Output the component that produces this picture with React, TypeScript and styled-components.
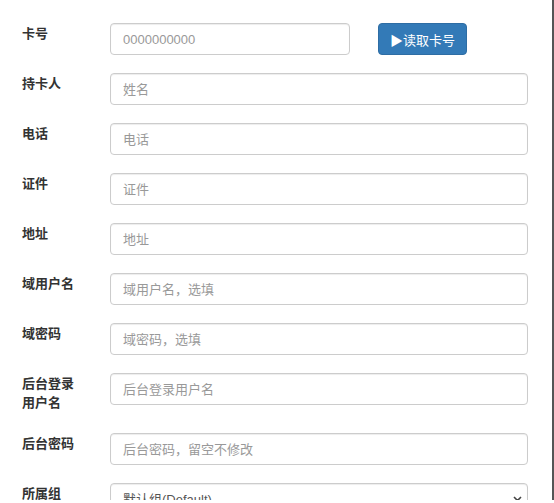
import React from "react";
import styled, { createGlobalStyle } from "styled-components";

const Global = createGlobalStyle`
  html, body { margin: 0; padding: 0; background: #fff; }
  * { box-sizing: border-box; }
`;

const FONT = `"Liberation Sans", "Noto Sans CJK SC", sans-serif`;

const Page = styled.div`
  width: 554px;
  height: 503px;
  background: #fff;
  overflow: hidden;
`;

const Panel = styled.div`
  width: 554px;
  height: 500px;
  overflow: hidden;
  border-right: 2px solid #555;
  font-family: ${FONT};
  font-size: 13px;
  color: #333;
`;

const Form = styled.form`
  display: flex;
  flex-direction: column;
  padding: 23px 0 0 22px;
`;

const Row = styled.div`
  display: flex;
  align-items: flex-start;
  margin-bottom: 18px;
`;

const Label = styled.label`
  width: 60px;
  margin-right: 28px;
  padding: 1px 0 3px;
  line-height: 19px;
  font-weight: bold;
  font-size: 13px;
  color: #333;
`;

const Input = styled.input<{ $w?: number }>`
  width: ${(p) => (p.$w ? `${p.$w}px` : "418px")};
  height: 32px;
  padding: 6px 12px;
  border: 1px solid #ccc;
  border-radius: 4px;
  box-shadow: inset 0 1px 1px rgba(0, 0, 0, 0.075);
  font-family: ${FONT};
  font-size: 13px;
  color: #555;
  background: #fff;
  outline: none;
  &::placeholder { color: #999; }
`;

const Button = styled.button`
  margin-left: 28px;
  width: 89px;
  height: 32px;
  padding: 0 10px;
  border: 1px solid #2e6da4;
  border-radius: 4px;
  background: #337ab7;
  color: #fff;
  font-family: ${FONT};
  font-size: 13px;
  white-space: nowrap;
  cursor: pointer;
`;

const SelectWrap = styled.div`
  position: relative;
  width: 418px;
  height: 32px;
`;

const Select = styled.select`
  width: 100%;
  height: 32px;
  padding: 6px 12px;
  border: 1px solid #ccc;
  border-radius: 4px;
  box-shadow: inset 0 1px 1px rgba(0, 0, 0, 0.075);
  font-family: ${FONT};
  font-size: 13px;
  color: #555;
  background: #fff;
  appearance: none;
  -webkit-appearance: none;
  outline: none;
`;

const Chevron = styled.svg`
  position: absolute;
  right: 6px;
  top: 12px;
  width: 9px;
  height: 8px;
  pointer-events: none;
`;

const fields: { label: string; ph: string }[] = [
  { label: "持卡人", ph: "姓名" },
  { label: "电话", ph: "电话" },
  { label: "证件", ph: "证件" },
  { label: "地址", ph: "地址" },
  { label: "域用户名", ph: "域用户名，选填" },
  { label: "域密码", ph: "域密码，选填" },
  { label: "后台登录用户名", ph: "后台登录用户名" },
  { label: "后台密码", ph: "后台密码，留空不修改" },
];

export default function App() {
  return (
    <Page>
      <Global />
      <Panel>
        <Form onSubmit={(e) => e.preventDefault()}>
          <Row>
            <Label>卡号</Label>
            <Input $w={240} placeholder="0000000000" />
            <Button type="button">▶读取卡号</Button>
          </Row>
          {fields.map((f) => (
            <Row key={f.label}>
              <Label>{f.label}</Label>
              <Input placeholder={f.ph} />
            </Row>
          ))}
          <Row>
            <Label>所属组</Label>
            <SelectWrap>
              <Select defaultValue="default">
                <option value="default">默认组(Default)</option>
              </Select>
              <Chevron viewBox="0 0 9 8">
                <path d="M1 2 L4.5 5.5 L8 2" fill="none" stroke="#444" strokeWidth="1.6" />
              </Chevron>
            </SelectWrap>
          </Row>
        </Form>
      </Panel>
    </Page>
  );
}
